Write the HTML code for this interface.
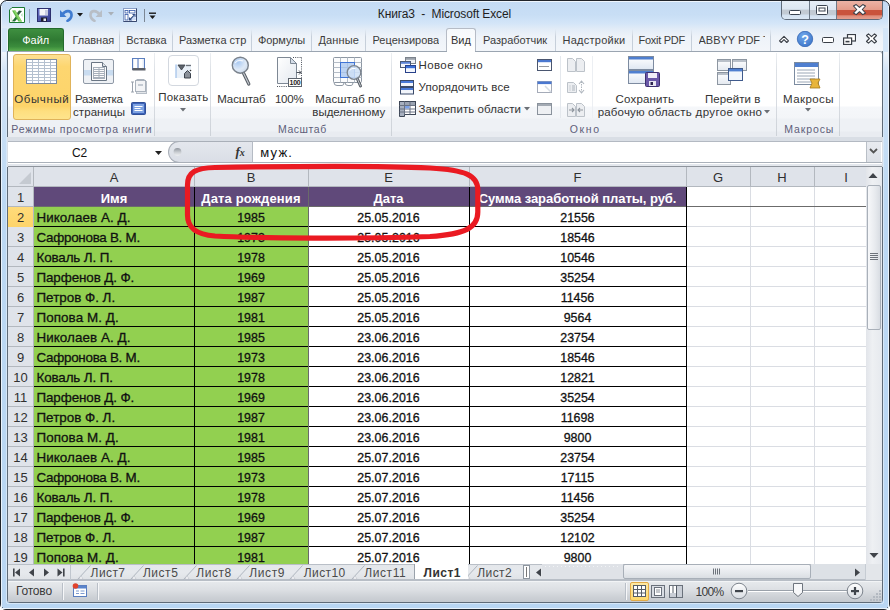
<!DOCTYPE html>
<html><head><meta charset="utf-8">
<style>
*{margin:0;padding:0;box-sizing:border-box}
html,body{width:890px;height:610px;overflow:hidden;background:#fff}
body{font-family:"Liberation Sans",sans-serif;position:relative;color:#000}
.a{position:absolute}
.t{position:absolute;white-space:nowrap;line-height:1}
</style></head><body>
<div class="a" style="left:0px;top:0px;width:890px;height:610px;border:1px solid #20242b;border-radius:7px 7px 6px 6px;background:linear-gradient(#c4dbf4 0,#c8def5 14px,#d3e5f8 22px,#e2ecf7 28px,#eef3f9 36px,#f3f6fa 50px,#d2e4f7 70px,#bcd8f3 200px,#b9d6f3 610px);overflow:hidden"></div>
<div class="a" style="left:1px;top:28px;width:6px;height:24px;background:#d4e6f8"></div>
<div class="a" style="left:883px;top:28px;width:6px;height:24px;background:#d4e6f8"></div>
<div class="a" style="left:1px;top:6px;width:1px;height:603px;background:#eaf3fc"></div>
<div class="a" style="left:6px;top:1px;width:876px;height:1px;background:#eef5fd"></div>
<div class="a" style="left:888px;top:6px;width:1px;height:603px;background:#eaf3fc"></div>
<div class="a" style="left:6px;top:51px;width:1px;height:552px;background:#d6e7f8"></div>
<div class="a" style="left:883px;top:51px;width:1px;height:552px;background:#d6e7f8"></div>
<div class="a" style="left:2px;top:608px;width:886px;height:1px;background:#eaf3fc"></div>
<div class="a" style="left:7px;top:603px;width:876px;height:1px;background:#d6e7f8"></div>
<div class="a" style="left:7px;top:51px;width:876px;height:552px;border:1px solid #5f6b78;border-top:none;border-radius:0 0 4px 4px"></div>
<svg class="a" style="left:9px;top:7px" width="16" height="16" viewBox="0 0 16 16"><path d="M0.5 3 L3 0.5 H15.5 V15.5 H0.5 Z" fill="#fff" stroke="#1b7a33"/><path d="M1.5 4 V14.5 H4 Z" fill="#e2ecd8"/><path d="M13 4 L8.6 9.2 L6.8 7.4 L10 3.4 Z" fill="#2c5e3c"/><path d="M3 14.2 L7 9.3 L8.9 11 L5.8 14.6 Z" fill="#1f6b35"/><path d="M3 3.4 H6.4 L13 14.6 H9.4 Z" fill="#5dbb46"/><path d="M4.4 3.4 H6.4 L13 14.6 H11 Z" fill="#8fd36a"/><path d="M13.5 6 L12 8 L13.5 10 Z" fill="#a6dfb0"/></svg>
<div class="a" style="left:29px;top:9px;width:1px;height:14px;background:#8fa3b8"></div>
<svg class="a" style="left:37px;top:8px" width="14" height="14" viewBox="0 0 14 14"><defs><linearGradient id="sg" x1="0" y1="0" x2="1" y2="1"><stop offset="0" stop-color="#6b74c8"/><stop offset="1" stop-color="#333a8c"/></linearGradient></defs><rect x="0.5" y="0.5" width="13" height="13" fill="url(#sg)" stroke="#2c2f6e"/><rect x="2.5" y="1" width="8.5" height="6.5" fill="#f4f4f8"/><rect x="8" y="2" width="3" height="5" fill="#c8cce0"/><rect x="4" y="9.5" width="6" height="4" fill="#1c1c2c"/><rect x="6.5" y="10.5" width="2.5" height="2.5" fill="#e8e8f0"/></svg>
<svg class="a" style="left:59px;top:8px" width="14" height="14" viewBox="0 0 14 14"><path d="M1 2 L1 9 L7.5 9 Z" fill="#3f7bd0"/><path d="M3.5 6.5 C6 2.5 12 1.5 12.5 6.5 C12.8 9.5 11 11.5 8.5 12.8" fill="none" stroke="#3f7bd0" stroke-width="2.6" stroke-linecap="round"/></svg>
<svg class="a" style="left:77px;top:13px" width="7" height="4" viewBox="0 0 7 4"><path d="M0 0h6l-3 3.5z" fill="#1a1a1a"/></svg>
<svg class="a" style="left:89px;top:8px" width="14" height="14" viewBox="0 0 14 14"><path d="M13 2 L13 9 L6.5 9 Z" fill="#b8bec6"/><path d="M10.5 6.5 C8 2.5 2 1.5 1.5 6.5 C1.2 9.5 3 11.5 5.5 12.8" fill="none" stroke="#b8bec6" stroke-width="2.6" stroke-linecap="round"/></svg>
<svg class="a" style="left:108px;top:12px" width="7" height="4" viewBox="0 0 7 4"><path d="M0 0h6l-3 3.5z" fill="#a9b0b8"/></svg>
<svg class="a" style="left:123px;top:8px" width="14" height="14" viewBox="0 0 14 14"><rect x="0.5" y="0.5" width="13" height="13" fill="#fff" stroke="#8aa0c8"/><path d="M13.5 0.5 V13.5 H0.5" fill="none" stroke="#3a4a70"/><rect x="2" y="2.5" width="3" height="2.5" fill="#fff" stroke="#3358a8" stroke-width="0.8"/><rect x="6.5" y="2.5" width="5.5" height="2.5" fill="#fff" stroke="#3358a8" stroke-width="0.8"/><rect x="2" y="6.5" width="3" height="5.5" fill="#fff" stroke="#3358a8" stroke-width="0.8"/><path d="M7 11.5 L11.5 7 M9.5 6.5 H12 V9 M6.5 9.5 V12 H9" fill="none" stroke="#2f4a80" stroke-width="1.1"/><path d="M12 6 L13 12 L7 13 Z" fill="#9cb8ea" opacity="0.5"/></svg>
<div class="a" style="left:144px;top:9px;width:1px;height:13px;background:#7c8794"></div>
<svg class="a" style="left:149px;top:12px" width="8" height="8" viewBox="0 0 8 8"><rect x="0" y="0.5" width="7" height="1.4" fill="#1a1a1a"/><path d="M0.5 3.5h6l-3 3.5z" fill="#1a1a1a"/></svg>
<div class="t" style="left:377.78px;top:7.79px;font-size:12px;color:#1e1e1e;letter-spacing:-0.121px;">Книга3&nbsp;&nbsp;-&nbsp;&nbsp;Microsoft Excel</div>
<div class="a" style="left:781px;top:1px;width:102px;height:19px;border:1px solid #5f6b7a;border-top:none;border-radius:0 0 5px 5px;overflow:hidden;background:#d0dcea"><div class="a" style="left:0;top:0;width:27px;height:18px;background:linear-gradient(#e6eef7 0,#dce6f2 45%,#c2cad3 50%,#c3cbd4 72%,#d3e1f0 78%,#dbe7f4 100%)"></div><div class="a" style="left:27px;top:0;width:1px;height:19px;background:#6d7987"></div><div class="a" style="left:28px;top:0;width:26px;height:19px;background:linear-gradient(#e6eef7 0,#dce6f2 45%,#c2cad3 50%,#c3cbd4 72%,#d3e1f0 78%,#dbe7f4 100%)"></div><div class="a" style="left:54px;top:0;width:1px;height:19px;background:#6d7987"></div><div class="a" style="left:55px;top:0;width:47px;height:19px;background:linear-gradient(#ebb3a5 0,#e49c8a 45%,#c9533c 50%,#c9533c 72%,#de8c79 78%,#e8a494 100%)"></div></div>
<svg class="a" style="left:789px;top:10px" width="12" height="5" viewBox="0 0 12 5"><rect x="0.5" y="0.5" width="11" height="4" rx="1" fill="#fff" stroke="#3a4350"/></svg>
<svg class="a" style="left:816px;top:5px" width="12" height="10" viewBox="0 0 12 10"><rect x="0.5" y="0.5" width="11" height="9" rx="1" fill="#fff" stroke="#3a4350"/><rect x="3" y="3" width="6" height="3" fill="none" stroke="#3a4350"/></svg>
<svg class="a" style="left:852px;top:4px" width="15" height="12" viewBox="0 0 15 12"><path d="M1.5 2 L4.2 0.6 L7.5 3.4 L10.8 0.6 L13.5 2 L10.3 5.5 L13.5 9 L10.8 10.6 L7.5 7.7 L4.2 10.6 L1.5 9 L4.7 5.5 Z" fill="#fff" stroke="#3a3f47" stroke-width="1.1" stroke-linejoin="round"/></svg>
<div class="a" style="left:8px;top:28px;width:56px;height:23px;border:1px solid #236b2c;border-bottom:none;border-radius:3px 3px 0 0;background:linear-gradient(#3f8f40 0,#2f7a33 50%,#3b8c3c 80%,#5aae4e 100%)"></div>
<div class="t" style="left:22.20px;top:34.61px;font-size:11px;color:#fff;">Файл</div>
<div class="t" style="left:72.40px;top:34.51px;font-size:11px;color:#3c3c3c;">Главная</div>
<div class="t" style="left:126.30px;top:34.51px;font-size:11px;color:#3c3c3c;letter-spacing:-0.1px;">Вставка</div>
<div class="t" style="left:179.00px;top:34.51px;font-size:11px;color:#3c3c3c;">Разметка стр</div>
<div class="t" style="left:258.00px;top:34.51px;font-size:11px;color:#3c3c3c;letter-spacing:-0.1px;">Формулы</div>
<div class="t" style="left:318.50px;top:34.51px;font-size:11px;color:#3c3c3c;letter-spacing:0.15px;">Данные</div>
<div class="t" style="left:372.50px;top:34.51px;font-size:11px;color:#3c3c3c;width:66.5px;overflow:hidden;">Рецензирова</div>
<div class="t" style="left:483.00px;top:34.51px;font-size:11px;color:#3c3c3c;width:65px;overflow:hidden;">Разработчик</div>
<div class="t" style="left:562.50px;top:34.51px;font-size:11px;color:#3c3c3c;letter-spacing:0.25px;">Надстройки</div>
<div class="t" style="left:638.50px;top:34.51px;font-size:11px;color:#3c3c3c;letter-spacing:-0.27px;">Foxit PDF</div>
<div class="t" style="left:698.50px;top:34.51px;font-size:11px;color:#3c3c3c;width:66.5px;overflow:hidden;">ABBYY PDF Tr</div>
<div class="a" style="left:119px;top:29px;width:1px;height:22px;background:linear-gradient(rgba(205,214,226,0),#c6cfda 35%,#c6cfda)"></div>
<div class="a" style="left:172px;top:29px;width:1px;height:22px;background:linear-gradient(rgba(205,214,226,0),#c6cfda 35%,#c6cfda)"></div>
<div class="a" style="left:251px;top:29px;width:1px;height:22px;background:linear-gradient(rgba(205,214,226,0),#c6cfda 35%,#c6cfda)"></div>
<div class="a" style="left:311px;top:29px;width:1px;height:22px;background:linear-gradient(rgba(205,214,226,0),#c6cfda 35%,#c6cfda)"></div>
<div class="a" style="left:365px;top:29px;width:1px;height:22px;background:linear-gradient(rgba(205,214,226,0),#c6cfda 35%,#c6cfda)"></div>
<div class="a" style="left:555px;top:29px;width:1px;height:22px;background:linear-gradient(rgba(205,214,226,0),#c6cfda 35%,#c6cfda)"></div>
<div class="a" style="left:632px;top:29px;width:1px;height:22px;background:linear-gradient(rgba(205,214,226,0),#c6cfda 35%,#c6cfda)"></div>
<div class="a" style="left:691px;top:29px;width:1px;height:22px;background:linear-gradient(rgba(205,214,226,0),#c6cfda 35%,#c6cfda)"></div>
<div class="a" style="left:770px;top:29px;width:1px;height:22px;background:linear-gradient(rgba(205,214,226,0),#c6cfda 35%,#c6cfda)"></div>
<div class="a" style="left:446px;top:28px;width:30px;height:24px;border:1px solid #b6bcc6;border-bottom:none;border-radius:3px 3px 0 0;background:linear-gradient(#f6f9fc,#ffffff)"></div>
<div class="t" style="left:451.00px;top:34.51px;font-size:11px;color:#333;">Вид</div>
<svg class="a" style="left:778px;top:35px" width="12" height="9" viewBox="0 0 12 9"><path d="M1.5 5.8 L6 1.3 L10.5 5.8 L8.8 7.5 L6 4.7 L3.2 7.5 Z" fill="#fff" stroke="#3a3f47" stroke-width="1.1" stroke-linejoin="round"/></svg>
<svg class="a" style="left:796px;top:31px" width="18" height="16" viewBox="0 0 18 16"><defs><radialGradient id="hg" cx="0.4" cy="0.3" r="0.8"><stop offset="0" stop-color="#6fa6ea"/><stop offset="1" stop-color="#3b74c8"/></radialGradient></defs><circle cx="9" cy="8" r="7.7" fill="url(#hg)" stroke="#3566b4" stroke-width="0.8"/><text x="9" y="12.6" font-family="Liberation Sans" font-weight="700" font-size="12.5" fill="#fff" text-anchor="middle">?</text></svg>
<svg class="a" style="left:822px;top:37px" width="12" height="6" viewBox="0 0 12 6"><rect x="0.5" y="0.5" width="11" height="5" rx="1" fill="#fff" stroke="#3a3f47"/></svg>
<svg class="a" style="left:843px;top:34px" width="13" height="11" viewBox="0 0 13 11"><rect x="4.5" y="0.5" width="8" height="6.5" fill="#fff" stroke="#3a3f47" stroke-width="1.2"/><rect x="0.6" y="4" width="8" height="6.5" fill="#fff" stroke="#3a3f47" stroke-width="1.2"/><rect x="2.5" y="6.8" width="4" height="1.6" fill="#3a3f47"/></svg>
<svg class="a" style="left:865px;top:33px" width="13" height="11" viewBox="0 0 13 11"><path d="M1.5 2.5 L3.5 0.8 L6.5 3.6 L9.5 0.8 L11.5 2.5 L8.6 5.5 L11.5 8.5 L9.5 10.2 L6.5 7.4 L3.5 10.2 L1.5 8.5 L4.4 5.5 Z" fill="#fff" stroke="#3a3f47" stroke-width="1.1" stroke-linejoin="round"/></svg>
<div class="a" style="left:7px;top:51px;width:876px;height:87px;border:1px solid #9ba5b1;border-left-color:#5f6b78;border-right-color:#5f6b78;border-radius:0 3px 0 0;background:linear-gradient(#ffffff 0,#ffffff 54px,#f5f7fa 55px,#f3f5f8 66px,#eef1f5 67px,#eef1f5 79px,#e9ecf1 80px,#e9ecf1 100%)"></div>
<div class="a" style="left:447px;top:51px;width:28px;height:1px;background:#ffffff"></div>
<div class="a" style="left:154px;top:53px;width:1px;height:83px;background:linear-gradient(#eceff2,#dde1e6 20%,#d8dce2 60%,#cdd2d8 100%)"></div>
<div class="a" style="left:210px;top:53px;width:1px;height:83px;background:linear-gradient(#eceff2,#dde1e6 20%,#d8dce2 60%,#cdd2d8 100%)"></div>
<div class="a" style="left:391px;top:53px;width:1px;height:83px;background:linear-gradient(#eceff2,#dde1e6 20%,#d8dce2 60%,#cdd2d8 100%)"></div>
<div class="a" style="left:776px;top:53px;width:1px;height:83px;background:linear-gradient(#eceff2,#dde1e6 20%,#d8dce2 60%,#cdd2d8 100%)"></div>
<div class="a" style="left:839px;top:53px;width:1px;height:83px;background:linear-gradient(#eceff2,#dde1e6 20%,#d8dce2 60%,#cdd2d8 100%)"></div>
<div class="a" style="left:560px;top:56px;width:1px;height:62px;background:#e4e8ed"></div>
<div class="a" style="left:592px;top:56px;width:1px;height:62px;background:#eceff3"></div>
<div class="a" style="left:13px;top:54px;width:58px;height:66px;border:1px solid #e0b35a;border-radius:3px;background:linear-gradient(#fde093 0,#fdd670 18%,#fdd46a 80%,#fedf80 88%,#fee48c 100%)"></div>
<svg class="a" style="left:26px;top:59px" width="32" height="26" viewBox="0 0 32 26"><rect x="0.5" y="0.5" width="30" height="24" fill="#ffffff" stroke="#8392a6"/><path d="M0.5 3.5 H30.5" stroke="#b4c0cf"/><path d="M0.5 6.5 H30.5" stroke="#b4c0cf"/><path d="M0.5 9.5 H30.5" stroke="#b4c0cf"/><path d="M0.5 12.5 H30.5" stroke="#b4c0cf"/><path d="M0.5 15.5 H30.5" stroke="#b4c0cf"/><path d="M0.5 18.5 H30.5" stroke="#b4c0cf"/><path d="M0.5 21.5 H30.5" stroke="#b4c0cf"/><path d="M6.5 0.5 V24.5" stroke="#b4c0cf"/><path d="M12.5 0.5 V24.5" stroke="#b4c0cf"/><path d="M18.5 0.5 V24.5" stroke="#b4c0cf"/><path d="M24.5 0.5 V24.5" stroke="#b4c0cf"/><rect x="0.5" y="0.5" width="30" height="24" fill="none" stroke="#7d8ca0"/></svg>
<div class="t" style="left:14.31px;top:93.52px;font-size:11.5px;color:#333;letter-spacing:0.589px;">Обычный</div>
<svg class="a" style="left:83px;top:59px" width="32" height="26" viewBox="0 0 32 26"><rect x="0.5" y="0.5" width="30" height="24" rx="1.5" fill="#eef1f5" stroke="#8f99a6"/><rect x="1" y="11" width="29" height="5.5" fill="#c9dcf0"/><path d="M8.5 3.5 H19.5 L23.5 7.5 V21.5 H8.5 Z" fill="#fbfbfc" stroke="#6a7684"/><path d="M19.5 3.5 V7.5 H23.5" fill="#dfe3e8" stroke="#6a7684"/><rect x="10.5" y="8.5" width="11" height="11" fill="none" stroke="#a7b0bb"/><path d="M10.5 10.5h11M10.5 12.5h11M10.5 14.5h11M10.5 16.5h11M10.5 18.5h11M16 8.5v11" stroke="#a7b0bb"/></svg>
<div class="t" style="left:75.01px;top:93.52px;font-size:11.5px;color:#333;letter-spacing:-0.26px;">Разметка</div>
<div class="t" style="left:73.01px;top:106.82px;font-size:11.5px;color:#333;letter-spacing:0.078px;">страницы</div>
<svg class="a" style="left:132px;top:58px" width="14" height="13" viewBox="0 0 14 13"><rect x="0.5" y="0.5" width="12" height="11" fill="#e4ecf8" stroke="#5c7fbf"/><rect x="2" y="1" width="3.5" height="9" fill="#fff"/><rect x="7" y="1" width="3.5" height="9" fill="#fff"/><path d="M6 1v10" stroke="#5c7fbf"/><rect x="0.5" y="10" width="13" height="2.5" fill="#5a5f68"/></svg>
<svg class="a" style="left:131px;top:79px" width="16" height="15" viewBox="0 0 16 15"><path d="M1.5 3v10M0 3h3M0 13h3" stroke="#9aa2ad"/><rect x="5.5" y="2.5" width="10" height="12" fill="#e3e6ea" stroke="#b7bec7"/><rect x="4.5" y="1.5" width="10" height="11" fill="#f3f4f6" stroke="#aab2bc"/><rect x="7" y="5" width="5" height="2" fill="#c4cad2"/><path d="M6 0.5h7M6 0v2M13 0v2" stroke="#aab2bc"/></svg>
<svg class="a" style="left:131px;top:102px" width="15" height="13" viewBox="0 0 15 13"><rect x="0.5" y="0.5" width="14" height="12" rx="1" fill="#3d63b8" stroke="#2f4f98"/><rect x="2" y="2" width="11" height="9" fill="#7fa3e2"/><path d="M3.5 4.5h8M3.5 6.5h6M3.5 8.5h8" stroke="#fff" stroke-width="1"/></svg>
<div class="t" style="left:11.37px;top:124.16px;font-size:10.5px;color:#5e5e7a;letter-spacing:0.791px;">Режимы просмотра книги</div>
<div class="a" style="left:168px;top:55px;width:31px;height:31px;border:1px solid #d3d8df;border-radius:4px;background:#fff"></div>
<svg class="a" style="left:175px;top:63px" width="17" height="16" viewBox="0 0 17 16"><rect x="1" y="1.5" width="15" height="13.5" fill="#e9f0f8"/><path d="M1 1.5 V15" stroke="#9fc0ea" stroke-width="1.2"/><path d="M3 2 H10 L6.5 7 Z" fill="#5d636b" stroke="#3b4048" stroke-width="0.8"/><path d="M11 2.5 H16" stroke="#6d737b" stroke-width="1.3"/><path d="M9.5 15 V10.5 L12.5 7.5 L15.5 10.5 V15 Z" fill="#8a9099" stroke="#2f3540" stroke-width="0.9"/><circle cx="15.5" cy="7.5" r="0.8" fill="#333"/></svg>
<div class="t" style="left:158.31px;top:91.52px;font-size:11.5px;color:#333;letter-spacing:0.156px;">Показать</div>
<svg class="a" style="left:180px;top:108px" width="7" height="4" viewBox="0 0 7 4"><path d="M0 0h6l-3 3.5z" fill="#6b6f75"/></svg>
<svg class="a" style="left:230px;top:55px" width="22" height="32" viewBox="0 0 22 32"><defs><radialGradient id="lg" cx="0.35" cy="0.3" r="0.8"><stop offset="0" stop-color="#a9c9f2"/><stop offset="0.6" stop-color="#dfeaf7"/><stop offset="1" stop-color="#c9d6e6"/></radialGradient></defs><path d="M13.2 17.5 L18.8 29" stroke="#555b63" stroke-width="3.2" stroke-linecap="round"/><path d="M13.2 17.5 L18.8 29" stroke="#c3c8ce" stroke-width="1.2" stroke-linecap="round"/><circle cx="10.3" cy="10.2" r="8" fill="url(#lg)" stroke="#7b838d" stroke-width="1.4"/><path d="M5 8 q3 -4 8 -2" stroke="#fff" stroke-width="1.2" fill="none" opacity="0.8"/></svg>
<div class="t" style="left:217.31px;top:93.52px;font-size:11.5px;color:#333;letter-spacing:-0.137px;">Масштаб</div>
<svg class="a" style="left:276px;top:56px" width="28" height="33" viewBox="0 0 28 33"><defs><linearGradient id="pg" x1="0" y1="0" x2="1" y2="1"><stop offset="0" stop-color="#ffffff"/><stop offset="1" stop-color="#e3e8ef"/></linearGradient></defs><path d="M1.5 1.5 H14.5 L20.5 7.5 V27.5 H1.5 Z" fill="url(#pg)" stroke="#7e8894"/><path d="M14.5 1.5 V7.5 H20.5 Z" fill="#d5dde8" stroke="#7e8894"/><path d="M17 1.5 H26 M25.5 1.5 V31 M1 30.5 H25" stroke="#4a505a" stroke-dasharray="1 1.2"/><path d="M20.5 16.5 H25 M23 14.5 L25 16.5 L23 18.5" fill="none" stroke="#4a505a"/><rect x="12.5" y="22.5" width="13" height="8" fill="#fff" stroke="#5d646e"/><text x="19" y="29.3" font-family="Liberation Sans" font-weight="700" font-size="7" fill="#222" text-anchor="middle" letter-spacing="-0.3">100</text></svg>
<div class="t" style="left:274.91px;top:93.52px;font-size:11.5px;color:#333;letter-spacing:-0.214px;">100%</div>
<svg class="a" style="left:333px;top:57px" width="30" height="31" viewBox="0 0 30 31"><rect x="0.5" y="0.5" width="28" height="25" rx="1" fill="#fbfcfd" stroke="#8d97a3"/><path d="M0.5 5.5 H28.5" stroke="#b3bcc7"/><path d="M0.5 10.5 H28.5" stroke="#b3bcc7"/><path d="M0.5 15.5 H28.5" stroke="#b3bcc7"/><path d="M0.5 20.5 H28.5" stroke="#b3bcc7"/><path d="M7.5 0.5 V25.5" stroke="#b3bcc7"/><path d="M14.5 0.5 V25.5" stroke="#b3bcc7"/><path d="M21.5 0.5 V25.5" stroke="#b3bcc7"/><path d="M1 25.5 q0 3 3 3 h5 q2 0 2 -3 M12 25.5 q0 3 3 3 h3 q2 0 2 -3" fill="none" stroke="#8d97a3"/><rect x="7.5" y="5.5" width="14" height="15" fill="#a6c4ee" fill-opacity="0.75" stroke="#3f74d6"/><path d="M24 21 L27.5 29" stroke="#555b63" stroke-width="3" stroke-linecap="round"/><path d="M24 21 L27.5 29" stroke="#c3c8ce" stroke-width="1" stroke-linecap="round"/><circle cx="21" cy="15.5" r="6.8" fill="#cfe0f6" fill-opacity="0.85" stroke="#7b838d" stroke-width="1.3"/><path d="M16.5 13.5 q2 -3 6 -2" stroke="#fff" stroke-width="1" fill="none"/></svg>
<div class="t" style="left:315.31px;top:93.52px;font-size:11.5px;color:#333;letter-spacing:0.039px;">Масштаб по</div>
<div class="t" style="left:312.31px;top:106.82px;font-size:11.5px;color:#333;letter-spacing:-0.021px;">выделенному</div>
<div class="t" style="left:277.97px;top:124.16px;font-size:10.5px;color:#5e5e7a;letter-spacing:0.554px;">Масштаб</div>
<svg class="a" style="left:399px;top:56px" width="18" height="17" viewBox="0 0 18 17"><rect x="6.5" y="1.5" width="10" height="6" fill="#eef0f3" stroke="#7c838c"/><rect x="7" y="2" width="9" height="1.8" fill="#9aa1aa"/><rect x="1.5" y="5.5" width="10" height="6" fill="#f3f5fa" stroke="#4b5a78"/><rect x="2" y="6" width="9" height="1.8" fill="#5f86d8"/><rect x="6.5" y="9.5" width="10" height="7" fill="#f4f7fd" stroke="#28418a"/><rect x="7" y="10" width="9" height="2.2" fill="#3b6fd6"/></svg>
<div class="t" style="left:418.61px;top:59.52px;font-size:11.5px;color:#333;letter-spacing:0.36px;">Новое окно</div>
<svg class="a" style="left:400px;top:80px" width="15" height="15" viewBox="0 0 15 15"><rect x="0.5" y="0.5" width="13" height="6" fill="#f2f5fb" stroke="#3a4a6a"/><rect x="1" y="1" width="12" height="2" fill="#4a7ad8"/><rect x="0.5" y="7.5" width="13" height="6.5" fill="#f2f5fb" stroke="#3a4a6a"/><rect x="1" y="8" width="12" height="2" fill="#4a7ad8"/></svg>
<div class="t" style="left:418.61px;top:81.52px;font-size:11.5px;color:#333;letter-spacing:0.094px;">Упорядочить все</div>
<svg class="a" style="left:399px;top:101px" width="18" height="16" viewBox="0 0 18 16"><rect x="0.5" y="0.5" width="16" height="13" fill="#fff" stroke="#3d4656"/><rect x="1" y="1" width="15" height="3" fill="#9aa3b2"/><rect x="1" y="1" width="4.5" height="14" fill="#a7b0bf"/><path d="M0.5 4.5H16.5M0.5 8H16.5M0.5 11H16.5M5.5 0.5V13.5M11 0.5V13.5" stroke="#6a7384"/><rect x="6" y="5" width="4.5" height="2.5" fill="#7aa0e6"/><path d="M0.5 13.5 V15.5 H5.5 V13.5" fill="#a7b0bf" stroke="#3d4656"/></svg>
<div class="t" style="left:418.61px;top:103.52px;font-size:11.5px;color:#333;letter-spacing:0.068px;">Закрепить области</div>
<svg class="a" style="left:524px;top:107px" width="7" height="4" viewBox="0 0 7 4"><path d="M0 0h6l-3 3.5z" fill="#6b6f75"/></svg>
<svg class="a" style="left:536px;top:58px" width="17" height="14" viewBox="0 0 17 14"><rect x="1.5" y="1.5" width="14" height="11" fill="#fff" stroke="#4a5670"/><rect x="2" y="2" width="13" height="2.2" fill="#4b78d0"/><path d="M3.5 8.5h10" stroke="#2f3540" stroke-dasharray="1 1"/></svg>
<svg class="a" style="left:536px;top:80px" width="17" height="14" viewBox="0 0 17 14"><rect x="1.5" y="1.5" width="14" height="11" fill="#fff" stroke="#4a5670" stroke-dasharray="1 1"/><rect x="1.5" y="1.5" width="14" height="2.6" fill="#4b78d0"/><path d="M15 12 L9 6" stroke="#d6dce4" stroke-width="1.5"/></svg>
<svg class="a" style="left:536px;top:102px" width="17" height="14" viewBox="0 0 17 14"><rect x="1.5" y="1.5" width="14" height="11" fill="#eef0f3" stroke="#8a929c"/><rect x="2" y="2" width="13" height="2" fill="#a3aab3"/></svg>
<svg class="a" style="left:567px;top:58px" width="18" height="14" viewBox="0 0 18 14"><path d="M0.5 0.5 H5.5 L8.5 3.5 V13.5 H0.5 Z M9.5 0.5 H14.5 L17.5 3.5 V13.5 H9.5 Z" fill="#eceef1" stroke="#bcc2c9"/></svg>
<svg class="a" style="left:567px;top:80px" width="18" height="14" viewBox="0 0 18 14"><path d="M0.5 2.5 H6.5 L9.5 5.5 V12.5 H0.5 Z" fill="#eceef1" stroke="#bcc2c9"/><path d="M2.5 6h1M2.5 8h1M2.5 10h1M5 6h3M5 8h3M5 10h3" stroke="#aeb5bd"/><path d="M14.5 1.5 V12.5" stroke="#aeb5bd" stroke-dasharray="1.5 1"/><path d="M12 4 L14.5 1 L17 4 M12 10 L14.5 13 L17 10" fill="none" stroke="#aeb5bd" stroke-width="1.1"/></svg>
<svg class="a" style="left:567px;top:103px" width="18" height="14" viewBox="0 0 18 14"><path d="M0.5 0.5 H5.5 L8.5 3.5 V13.5 H0.5 Z M9.5 0.5 H14.5 L17.5 3.5 V13.5 H9.5 Z" fill="#eceef1" stroke="#bcc2c9"/><path d="M2 7h5M5 5l2 2-2 2M16 7h-5M13 5l-2 2 2 2" fill="none" stroke="#8f969e" stroke-width="1.1"/></svg>
<svg class="a" style="left:628px;top:56px" width="33" height="32" viewBox="0 0 33 32"><defs><linearGradient id="wg2" x1="0" y1="0" x2="0" y2="1"><stop offset="0" stop-color="#ffffff"/><stop offset="1" stop-color="#dfe7f2"/></linearGradient></defs><rect x="0.5" y="0.5" width="25" height="13" fill="url(#wg2)" stroke="#7d8ba0"/><rect x="1" y="1" width="24" height="2.5" fill="#4f7fd0"/><rect x="0.5" y="14.5" width="25" height="13" fill="url(#wg2)" stroke="#7d8ba0"/><rect x="1" y="15" width="24" height="2.5" fill="#4f7fd0"/><rect x="17.5" y="16.5" width="14" height="14" rx="1" fill="#6a58a8" stroke="#3e3070"/><rect x="20" y="17" width="9" height="5" fill="#f0eef8"/><rect x="21" y="25" width="7" height="5" fill="#e8e6f2"/><rect x="22.5" y="26" width="2.5" height="3" fill="#2d2450"/></svg>
<div class="t" style="left:615.61px;top:93.52px;font-size:11.5px;color:#333;letter-spacing:0.153px;">Сохранить</div>
<div class="t" style="left:597.71px;top:106.82px;font-size:11.5px;color:#333;letter-spacing:0.165px;">рабочую область</div>
<svg class="a" style="left:717px;top:59px" width="31" height="27" viewBox="0 0 31 27"><defs><linearGradient id="wg" x1="0" y1="0" x2="0" y2="1"><stop offset="0" stop-color="#ffffff"/><stop offset="1" stop-color="#e4e9f0"/></linearGradient></defs><rect x="0.5" y="0.5" width="13" height="11" fill="url(#wg)" stroke="#8d96a1"/><rect x="1" y="1" width="12" height="2" fill="#b9c0c9"/><rect x="15.5" y="0.5" width="14" height="11" fill="url(#wg)" stroke="#8d96a1"/><rect x="16" y="1" width="13" height="2" fill="#b9c0c9"/><rect x="0.5" y="13.5" width="13" height="12" fill="url(#wg)" stroke="#8d96a1"/><rect x="1" y="14" width="12" height="2" fill="#b9c0c9"/><rect x="11.5" y="9.5" width="14" height="12" fill="#f2f6fc" stroke="#3f5a8c"/><rect x="12" y="10" width="13" height="2.4" fill="#4f7fd0"/></svg>
<div class="t" style="left:705.01px;top:93.52px;font-size:11.5px;color:#333;letter-spacing:0.063px;">Перейти в</div>
<div class="t" style="left:695.61px;top:106.82px;font-size:11.5px;color:#333;letter-spacing:0.354px;">другое окно</div>
<svg class="a" style="left:764px;top:110px" width="7" height="4" viewBox="0 0 7 4"><path d="M0 0h6l-3 3.5z" fill="#6b6f75"/></svg>
<div class="t" style="left:569.77px;top:124.16px;font-size:10.5px;color:#5e5e7a;letter-spacing:1.618px;">Окно</div>
<svg class="a" style="left:794px;top:62px" width="32" height="28" viewBox="0 0 32 28"><rect x="0.5" y="0.5" width="24" height="22" fill="#fff" stroke="#7b8ba0"/><rect x="1" y="1" width="23" height="4" fill="#4f7fd0"/><path d="M3 8h18M3 11h18M3 14h18M3 17h18M3 20h18" stroke="#9aa6b5"/><path d="M16 17 h10 l-2 4 l2 5 h-10 l2-5z" fill="#e8b53c" stroke="#a57818" stroke-width="0.8"/></svg>
<div class="t" style="left:783.11px;top:93.52px;font-size:11.5px;color:#333;letter-spacing:0.404px;">Макросы</div>
<svg class="a" style="left:805px;top:108px" width="7" height="4" viewBox="0 0 7 4"><path d="M0 0h6l-3 3.5z" fill="#6b6f75"/></svg>
<div class="t" style="left:784.17px;top:124.16px;font-size:10.5px;color:#5e5e7a;letter-spacing:0.913px;">Макросы</div>
<div class="a" style="left:7px;top:137px;width:876px;height:30px;background:#d9dee5"></div>
<div class="a" style="left:8px;top:141px;width:874px;height:22px;background:#fff;border-top:1px solid #b3b9c2;border-bottom:1px solid #aab1ba"></div>
<div class="a" style="left:168px;top:141px;width:85px;height:22px;border:1px solid #a9afb8;border-right:1px solid #b5bbc4;border-radius:11px 0 0 11px;background:linear-gradient(#e4e7ed,#dadee6)"></div>
<svg class="a" style="left:173px;top:147px" width="10" height="10" viewBox="0 0 10 10"><defs><linearGradient id="kg" x1="0" y1="0" x2="0" y2="1"><stop offset="0" stop-color="#8e949c"/><stop offset="0.55" stop-color="#c9cdd2"/><stop offset="1" stop-color="#eef0f2"/></linearGradient></defs><circle cx="4.5" cy="4.8" r="3.9" fill="url(#kg)"/></svg>
<div class="t" style="left:235.5px;top:144.5px;font-family:'Liberation Serif',serif;font-style:italic;font-weight:700;font-size:13px;color:#333">f<span style="font-size:10px">x</span></div>
<div class="t" style="left:72.00px;top:147.39px;font-size:12px;color:#111;letter-spacing:-0.2px;">C2</div>
<svg class="a" style="left:155px;top:151px" width="8" height="5" viewBox="0 0 8 5"><path d="M0 0h7l-3.5 4z" fill="#222"/></svg>
<div class="t" style="left:260.32px;top:146.15px;font-size:13px;color:#111;letter-spacing:1.171px;">муж.</div>
<div class="a" style="left:866px;top:142px;width:15px;height:20px;background:linear-gradient(#e8ebf0,#dde1e7);border-left:1px solid #b9bfc7"></div>
<svg class="a" style="left:869px;top:148px" width="9" height="6" viewBox="0 0 9 6"><path d="M1 1 L4.5 4.5 L8 1" fill="none" stroke="#555" stroke-width="1.8"/></svg>
<div class="a" style="left:8px;top:163px;width:874px;height:3px;background:linear-gradient(#ffffff 0,#ffffff 33%,#e3e7ed 34%)"></div>
<div class="a" style="left:8px;top:166px;width:874px;height:1px;background:#8e949c"></div>
<div class="a" style="left:8px;top:167px;width:858px;height:20px;background:#dfe3ea"></div>
<div class="a" style="left:8px;top:186px;width:858px;height:1px;background:#b3b8bf"></div>
<svg class="a" style="left:8px;top:167px" width="26" height="20" viewBox="0 0 26 20"><path d="M23 5 L23 17 L11 17 Z" fill="#c5cad1"/></svg>
<div class="a" style="left:33px;top:167px;width:1px;height:20px;background:#b3b8bf"></div>
<div class="a" style="left:194px;top:167px;width:1px;height:20px;background:#b3b8bf"></div>
<div class="t" style="left:34px;width:160px;text-align:center;top:170.57px;font-size:13px;color:#2f2f2f">A</div>
<div class="a" style="left:308px;top:167px;width:1px;height:20px;background:#b3b8bf"></div>
<div class="t" style="left:194px;width:114px;text-align:center;top:170.57px;font-size:13px;color:#2f2f2f">B</div>
<div class="a" style="left:469px;top:167px;width:1px;height:20px;background:#b3b8bf"></div>
<div class="t" style="left:308px;width:161px;text-align:center;top:170.57px;font-size:13px;color:#2f2f2f">E</div>
<div class="a" style="left:686px;top:167px;width:1px;height:20px;background:#b3b8bf"></div>
<div class="t" style="left:469px;width:217px;text-align:center;top:170.57px;font-size:13px;color:#2f2f2f">F</div>
<div class="a" style="left:750px;top:167px;width:1px;height:20px;background:#b3b8bf"></div>
<div class="t" style="left:686px;width:64px;text-align:center;top:170.57px;font-size:13px;color:#2f2f2f">G</div>
<div class="a" style="left:814px;top:167px;width:1px;height:20px;background:#b3b8bf"></div>
<div class="t" style="left:750px;width:64px;text-align:center;top:170.57px;font-size:13px;color:#2f2f2f">H</div>
<div class="t" style="left:814px;width:64px;text-align:center;top:170.57px;font-size:13px;color:#2f2f2f">I</div>
<div class="a" style="left:34px;top:187px;width:832px;height:378px;background:#fff"></div>
<div class="a" style="left:8px;top:187px;width:25px;height:378px;background:#dfe3ea"></div>
<div class="a" style="left:33px;top:187px;width:1px;height:378px;background:#b3b8bf"></div>
<div class="a" style="left:8px;top:206px;width:25px;height:1px;background:#b3b8bf"></div>
<div class="t" style="left:8px;width:25px;text-align:center;top:190.67px;font-size:13px;color:#2f2f2f">1</div>
<div class="a" style="left:8px;top:207px;width:25px;height:20px;background:linear-gradient(#ffdb7a,#fdd46a)"></div>
<div class="a" style="left:8px;top:226px;width:25px;height:1px;#f0a045"></div>
<div class="t" style="left:8px;width:25px;text-align:center;top:210.67px;font-size:13px;color:#2f2f2f">2</div>
<div class="a" style="left:8px;top:246px;width:25px;height:1px;background:#b3b8bf"></div>
<div class="t" style="left:8px;width:25px;text-align:center;top:230.67px;font-size:13px;color:#2f2f2f">3</div>
<div class="a" style="left:8px;top:266px;width:25px;height:1px;background:#b3b8bf"></div>
<div class="t" style="left:8px;width:25px;text-align:center;top:250.67px;font-size:13px;color:#2f2f2f">4</div>
<div class="a" style="left:8px;top:286px;width:25px;height:1px;background:#b3b8bf"></div>
<div class="t" style="left:8px;width:25px;text-align:center;top:270.67px;font-size:13px;color:#2f2f2f">5</div>
<div class="a" style="left:8px;top:306px;width:25px;height:1px;background:#b3b8bf"></div>
<div class="t" style="left:8px;width:25px;text-align:center;top:290.67px;font-size:13px;color:#2f2f2f">6</div>
<div class="a" style="left:8px;top:326px;width:25px;height:1px;background:#b3b8bf"></div>
<div class="t" style="left:8px;width:25px;text-align:center;top:310.67px;font-size:13px;color:#2f2f2f">7</div>
<div class="a" style="left:8px;top:346px;width:25px;height:1px;background:#b3b8bf"></div>
<div class="t" style="left:8px;width:25px;text-align:center;top:330.67px;font-size:13px;color:#2f2f2f">8</div>
<div class="a" style="left:8px;top:366px;width:25px;height:1px;background:#b3b8bf"></div>
<div class="t" style="left:8px;width:25px;text-align:center;top:350.67px;font-size:13px;color:#2f2f2f">9</div>
<div class="a" style="left:8px;top:386px;width:25px;height:1px;background:#b3b8bf"></div>
<div class="t" style="left:8px;width:25px;text-align:center;top:370.67px;font-size:13px;color:#2f2f2f">10</div>
<div class="a" style="left:8px;top:406px;width:25px;height:1px;background:#b3b8bf"></div>
<div class="t" style="left:8px;width:25px;text-align:center;top:390.67px;font-size:13px;color:#2f2f2f">11</div>
<div class="a" style="left:8px;top:426px;width:25px;height:1px;background:#b3b8bf"></div>
<div class="t" style="left:8px;width:25px;text-align:center;top:410.67px;font-size:13px;color:#2f2f2f">12</div>
<div class="a" style="left:8px;top:446px;width:25px;height:1px;background:#b3b8bf"></div>
<div class="t" style="left:8px;width:25px;text-align:center;top:430.67px;font-size:13px;color:#2f2f2f">13</div>
<div class="a" style="left:8px;top:466px;width:25px;height:1px;background:#b3b8bf"></div>
<div class="t" style="left:8px;width:25px;text-align:center;top:450.67px;font-size:13px;color:#2f2f2f">14</div>
<div class="a" style="left:8px;top:486px;width:25px;height:1px;background:#b3b8bf"></div>
<div class="t" style="left:8px;width:25px;text-align:center;top:470.67px;font-size:13px;color:#2f2f2f">15</div>
<div class="a" style="left:8px;top:506px;width:25px;height:1px;background:#b3b8bf"></div>
<div class="t" style="left:8px;width:25px;text-align:center;top:490.67px;font-size:13px;color:#2f2f2f">16</div>
<div class="a" style="left:8px;top:526px;width:25px;height:1px;background:#b3b8bf"></div>
<div class="t" style="left:8px;width:25px;text-align:center;top:510.6700000000001px;font-size:13px;color:#2f2f2f">17</div>
<div class="a" style="left:8px;top:546px;width:25px;height:1px;background:#b3b8bf"></div>
<div class="t" style="left:8px;width:25px;text-align:center;top:530.6700000000001px;font-size:13px;color:#2f2f2f">18</div>
<div class="a" style="left:8px;top:566px;width:25px;height:1px;background:#b3b8bf"></div>
<div class="t" style="left:8px;width:25px;text-align:center;top:550.6700000000001px;font-size:13px;color:#2f2f2f">19</div>
<div class="a" style="left:686px;top:206px;width:180px;height:1px;background:#dadde3"></div>
<div class="a" style="left:686px;top:226px;width:180px;height:1px;background:#dadde3"></div>
<div class="a" style="left:686px;top:246px;width:180px;height:1px;background:#dadde3"></div>
<div class="a" style="left:686px;top:266px;width:180px;height:1px;background:#dadde3"></div>
<div class="a" style="left:686px;top:286px;width:180px;height:1px;background:#dadde3"></div>
<div class="a" style="left:686px;top:306px;width:180px;height:1px;background:#dadde3"></div>
<div class="a" style="left:686px;top:326px;width:180px;height:1px;background:#dadde3"></div>
<div class="a" style="left:686px;top:346px;width:180px;height:1px;background:#dadde3"></div>
<div class="a" style="left:686px;top:366px;width:180px;height:1px;background:#dadde3"></div>
<div class="a" style="left:686px;top:386px;width:180px;height:1px;background:#dadde3"></div>
<div class="a" style="left:686px;top:406px;width:180px;height:1px;background:#dadde3"></div>
<div class="a" style="left:686px;top:426px;width:180px;height:1px;background:#dadde3"></div>
<div class="a" style="left:686px;top:446px;width:180px;height:1px;background:#dadde3"></div>
<div class="a" style="left:686px;top:466px;width:180px;height:1px;background:#dadde3"></div>
<div class="a" style="left:686px;top:486px;width:180px;height:1px;background:#dadde3"></div>
<div class="a" style="left:686px;top:506px;width:180px;height:1px;background:#dadde3"></div>
<div class="a" style="left:686px;top:526px;width:180px;height:1px;background:#dadde3"></div>
<div class="a" style="left:686px;top:546px;width:180px;height:1px;background:#dadde3"></div>
<div class="a" style="left:686px;top:566px;width:180px;height:1px;background:#dadde3"></div>
<div class="a" style="left:750px;top:187px;width:1px;height:378px;background:#dadde3"></div>
<div class="a" style="left:814px;top:187px;width:1px;height:378px;background:#dadde3"></div>
<div class="a" style="left:34px;top:187px;width:652px;height:20px;background:#60497a"></div>
<div class="a" style="left:34px;top:206px;width:832px;height:1px;background:#6b6b6b"></div>
<div class="a" style="left:34px;top:207px;width:274px;height:358px;background:#92d050"></div>
<div class="a" style="left:34px;top:226px;width:652px;height:1px;background:#000"></div>
<div class="a" style="left:34px;top:246px;width:652px;height:1px;background:#000"></div>
<div class="a" style="left:34px;top:266px;width:652px;height:1px;background:#000"></div>
<div class="a" style="left:34px;top:286px;width:652px;height:1px;background:#000"></div>
<div class="a" style="left:34px;top:306px;width:652px;height:1px;background:#000"></div>
<div class="a" style="left:34px;top:326px;width:652px;height:1px;background:#000"></div>
<div class="a" style="left:34px;top:346px;width:652px;height:1px;background:#000"></div>
<div class="a" style="left:34px;top:366px;width:652px;height:1px;background:#000"></div>
<div class="a" style="left:34px;top:386px;width:652px;height:1px;background:#000"></div>
<div class="a" style="left:34px;top:406px;width:652px;height:1px;background:#000"></div>
<div class="a" style="left:34px;top:426px;width:652px;height:1px;background:#000"></div>
<div class="a" style="left:34px;top:446px;width:652px;height:1px;background:#000"></div>
<div class="a" style="left:34px;top:466px;width:652px;height:1px;background:#000"></div>
<div class="a" style="left:34px;top:486px;width:652px;height:1px;background:#000"></div>
<div class="a" style="left:34px;top:506px;width:652px;height:1px;background:#000"></div>
<div class="a" style="left:34px;top:526px;width:652px;height:1px;background:#000"></div>
<div class="a" style="left:34px;top:546px;width:652px;height:1px;background:#000"></div>
<div class="a" style="left:34px;top:566px;width:652px;height:1px;background:#000"></div>
<div class="a" style="left:194px;top:187px;width:1px;height:378px;background:#000"></div>
<div class="a" style="left:308px;top:187px;width:1px;height:378px;background:#6a6a6a"></div>
<div class="a" style="left:469px;top:187px;width:1px;height:378px;background:#000"></div>
<div class="a" style="left:686px;top:187px;width:1px;height:378px;background:#000"></div>
<div class="t" style="left:34px;width:160px;text-align:center;top:191.57px;font-size:13px;color:#fff;font-weight:700;">Имя</div>
<div class="t" style="left:194px;width:114px;text-align:center;top:191.57px;font-size:13px;color:#fff;font-weight:700;letter-spacing:0.15px;">Дата рождения</div>
<div class="t" style="left:308px;width:161px;text-align:center;top:191.57px;font-size:13px;color:#fff;font-weight:700;">Дата</div>
<div class="t" style="left:469px;width:217px;text-align:center;top:191.57px;font-size:13px;color:#fff;font-weight:700;letter-spacing:-0.05px;">Сумма заработной платы, руб.</div>
<div class="a" style="left:34px;top:207px;width:832px;height:358px;overflow:hidden;-webkit-text-stroke:0.3px #111">
<div class="t" style="left:2.5px;top:4.13px;font-size:13.4px;color:#111;letter-spacing:0.07px">Николаев А. Д.</div>
<div class="t" style="left:160px;width:114px;text-align:center;top:5.24px;font-size:12.4px;color:#111">1985</div>
<div class="t" style="left:274px;width:161px;text-align:center;top:5.24px;font-size:12.4px;color:#111;letter-spacing:0.05px">25.05.2016</div>
<div class="t" style="left:435px;width:217px;text-align:center;top:5.24px;font-size:12.4px;color:#111">21556</div>
<div class="t" style="left:2.5px;top:24.13px;font-size:13.4px;color:#111;letter-spacing:-0.27px">Сафронова В. М.</div>
<div class="t" style="left:160px;width:114px;text-align:center;top:25.24px;font-size:12.4px;color:#111">1973</div>
<div class="t" style="left:274px;width:161px;text-align:center;top:25.24px;font-size:12.4px;color:#111;letter-spacing:0.05px">25.05.2016</div>
<div class="t" style="left:435px;width:217px;text-align:center;top:25.24px;font-size:12.4px;color:#111">18546</div>
<div class="t" style="left:2.5px;top:44.13px;font-size:13.4px;color:#111;letter-spacing:-0.12px">Коваль Л. П.</div>
<div class="t" style="left:160px;width:114px;text-align:center;top:45.24px;font-size:12.4px;color:#111">1978</div>
<div class="t" style="left:274px;width:161px;text-align:center;top:45.24px;font-size:12.4px;color:#111;letter-spacing:0.05px">25.05.2016</div>
<div class="t" style="left:435px;width:217px;text-align:center;top:45.24px;font-size:12.4px;color:#111">10546</div>
<div class="t" style="left:2.5px;top:64.13px;font-size:13.4px;color:#111;letter-spacing:-0.1px">Парфенов Д. Ф.</div>
<div class="t" style="left:160px;width:114px;text-align:center;top:65.24px;font-size:12.4px;color:#111">1969</div>
<div class="t" style="left:274px;width:161px;text-align:center;top:65.24px;font-size:12.4px;color:#111;letter-spacing:0.05px">25.05.2016</div>
<div class="t" style="left:435px;width:217px;text-align:center;top:65.24px;font-size:12.4px;color:#111">35254</div>
<div class="t" style="left:2.5px;top:84.13px;font-size:13.4px;color:#111;letter-spacing:0px">Петров Ф. Л.</div>
<div class="t" style="left:160px;width:114px;text-align:center;top:85.24px;font-size:12.4px;color:#111">1987</div>
<div class="t" style="left:274px;width:161px;text-align:center;top:85.24px;font-size:12.4px;color:#111;letter-spacing:0.05px">25.05.2016</div>
<div class="t" style="left:435px;width:217px;text-align:center;top:85.24px;font-size:12.4px;color:#111">11456</div>
<div class="t" style="left:2.5px;top:104.13px;font-size:13.4px;color:#111;letter-spacing:0.08px">Попова М. Д.</div>
<div class="t" style="left:160px;width:114px;text-align:center;top:105.24px;font-size:12.4px;color:#111">1981</div>
<div class="t" style="left:274px;width:161px;text-align:center;top:105.24px;font-size:12.4px;color:#111;letter-spacing:0.05px">25.05.2016</div>
<div class="t" style="left:435px;width:217px;text-align:center;top:105.24px;font-size:12.4px;color:#111">9564</div>
<div class="t" style="left:2.5px;top:124.13px;font-size:13.4px;color:#111;letter-spacing:0.07px">Николаев А. Д.</div>
<div class="t" style="left:160px;width:114px;text-align:center;top:125.24px;font-size:12.4px;color:#111">1985</div>
<div class="t" style="left:274px;width:161px;text-align:center;top:125.24px;font-size:12.4px;color:#111;letter-spacing:0.05px">23.06.2016</div>
<div class="t" style="left:435px;width:217px;text-align:center;top:125.24px;font-size:12.4px;color:#111">23754</div>
<div class="t" style="left:2.5px;top:144.13px;font-size:13.4px;color:#111;letter-spacing:-0.27px">Сафронова В. М.</div>
<div class="t" style="left:160px;width:114px;text-align:center;top:145.24px;font-size:12.4px;color:#111">1973</div>
<div class="t" style="left:274px;width:161px;text-align:center;top:145.24px;font-size:12.4px;color:#111;letter-spacing:0.05px">23.06.2016</div>
<div class="t" style="left:435px;width:217px;text-align:center;top:145.24px;font-size:12.4px;color:#111">18546</div>
<div class="t" style="left:2.5px;top:164.13px;font-size:13.4px;color:#111;letter-spacing:-0.12px">Коваль Л. П.</div>
<div class="t" style="left:160px;width:114px;text-align:center;top:165.24px;font-size:12.4px;color:#111">1978</div>
<div class="t" style="left:274px;width:161px;text-align:center;top:165.24px;font-size:12.4px;color:#111;letter-spacing:0.05px">23.06.2016</div>
<div class="t" style="left:435px;width:217px;text-align:center;top:165.24px;font-size:12.4px;color:#111">12821</div>
<div class="t" style="left:2.5px;top:184.13px;font-size:13.4px;color:#111;letter-spacing:-0.1px">Парфенов Д. Ф.</div>
<div class="t" style="left:160px;width:114px;text-align:center;top:185.24px;font-size:12.4px;color:#111">1969</div>
<div class="t" style="left:274px;width:161px;text-align:center;top:185.24px;font-size:12.4px;color:#111;letter-spacing:0.05px">23.06.2016</div>
<div class="t" style="left:435px;width:217px;text-align:center;top:185.24px;font-size:12.4px;color:#111">35254</div>
<div class="t" style="left:2.5px;top:204.13px;font-size:13.4px;color:#111;letter-spacing:0px">Петров Ф. Л.</div>
<div class="t" style="left:160px;width:114px;text-align:center;top:205.24px;font-size:12.4px;color:#111">1987</div>
<div class="t" style="left:274px;width:161px;text-align:center;top:205.24px;font-size:12.4px;color:#111;letter-spacing:0.05px">23.06.2016</div>
<div class="t" style="left:435px;width:217px;text-align:center;top:205.24px;font-size:12.4px;color:#111">11698</div>
<div class="t" style="left:2.5px;top:224.13px;font-size:13.4px;color:#111;letter-spacing:0.08px">Попова М. Д.</div>
<div class="t" style="left:160px;width:114px;text-align:center;top:225.24px;font-size:12.4px;color:#111">1981</div>
<div class="t" style="left:274px;width:161px;text-align:center;top:225.24px;font-size:12.4px;color:#111;letter-spacing:0.05px">23.06.2016</div>
<div class="t" style="left:435px;width:217px;text-align:center;top:225.24px;font-size:12.4px;color:#111">9800</div>
<div class="t" style="left:2.5px;top:244.13px;font-size:13.4px;color:#111;letter-spacing:0.07px">Николаев А. Д.</div>
<div class="t" style="left:160px;width:114px;text-align:center;top:245.24px;font-size:12.4px;color:#111">1985</div>
<div class="t" style="left:274px;width:161px;text-align:center;top:245.24px;font-size:12.4px;color:#111;letter-spacing:0.05px">25.07.2016</div>
<div class="t" style="left:435px;width:217px;text-align:center;top:245.24px;font-size:12.4px;color:#111">23754</div>
<div class="t" style="left:2.5px;top:264.13px;font-size:13.4px;color:#111;letter-spacing:-0.27px">Сафронова В. М.</div>
<div class="t" style="left:160px;width:114px;text-align:center;top:265.24px;font-size:12.4px;color:#111">1973</div>
<div class="t" style="left:274px;width:161px;text-align:center;top:265.24px;font-size:12.4px;color:#111;letter-spacing:0.05px">25.07.2016</div>
<div class="t" style="left:435px;width:217px;text-align:center;top:265.24px;font-size:12.4px;color:#111">17115</div>
<div class="t" style="left:2.5px;top:284.13px;font-size:13.4px;color:#111;letter-spacing:-0.12px">Коваль Л. П.</div>
<div class="t" style="left:160px;width:114px;text-align:center;top:285.24px;font-size:12.4px;color:#111">1978</div>
<div class="t" style="left:274px;width:161px;text-align:center;top:285.24px;font-size:12.4px;color:#111;letter-spacing:0.05px">25.07.2016</div>
<div class="t" style="left:435px;width:217px;text-align:center;top:285.24px;font-size:12.4px;color:#111">11456</div>
<div class="t" style="left:2.5px;top:304.13px;font-size:13.4px;color:#111;letter-spacing:-0.1px">Парфенов Д. Ф.</div>
<div class="t" style="left:160px;width:114px;text-align:center;top:305.24px;font-size:12.4px;color:#111">1969</div>
<div class="t" style="left:274px;width:161px;text-align:center;top:305.24px;font-size:12.4px;color:#111;letter-spacing:0.05px">25.07.2016</div>
<div class="t" style="left:435px;width:217px;text-align:center;top:305.24px;font-size:12.4px;color:#111">35254</div>
<div class="t" style="left:2.5px;top:324.13px;font-size:13.4px;color:#111;letter-spacing:0px">Петров Ф. Л.</div>
<div class="t" style="left:160px;width:114px;text-align:center;top:325.24px;font-size:12.4px;color:#111">1987</div>
<div class="t" style="left:274px;width:161px;text-align:center;top:325.24px;font-size:12.4px;color:#111;letter-spacing:0.05px">25.07.2016</div>
<div class="t" style="left:435px;width:217px;text-align:center;top:325.24px;font-size:12.4px;color:#111">12102</div>
<div class="t" style="left:2.5px;top:344.13px;font-size:13.4px;color:#111;letter-spacing:0.08px">Попова М. Д.</div>
<div class="t" style="left:160px;width:114px;text-align:center;top:345.24px;font-size:12.4px;color:#111">1981</div>
<div class="t" style="left:274px;width:161px;text-align:center;top:345.24px;font-size:12.4px;color:#111;letter-spacing:0.05px">25.07.2016</div>
<div class="t" style="left:435px;width:217px;text-align:center;top:345.24px;font-size:12.4px;color:#111">9800</div>
</div>
<div class="a" style="left:866px;top:167px;width:16px;height:398px;background:linear-gradient(90deg,#e2e5ea,#eef0f3 40%,#e6e9ee)"></div>
<svg class="a" style="left:868px;top:172px" width="11" height="7" viewBox="0 0 11 7"><path d="M0.5 6 L5 1 L9.5 6 Z" fill="#40444a"/></svg>
<div class="a" style="left:867px;top:185px;width:14px;height:145px;border:1px solid #a9b0b9;border-radius:2px;background:linear-gradient(90deg,#f7f8fa,#e7eaee 60%,#d9dde3)"></div>
<svg class="a" style="left:869px;top:253px" width="10" height="7" viewBox="0 0 10 7"><path d="M1 0.5h8M1 2.5h8M1 4.5h8M1 6.5h8" stroke="#6d737b"/></svg>
<svg class="a" style="left:869px;top:552px" width="11" height="7" viewBox="0 0 11 7"><path d="M0.5 1 L5 6 L9.5 1 Z" fill="#40444a"/></svg>
<div class="a" style="left:8px;top:564px;width:874px;height:16px;background:linear-gradient(#e4e7eb,#e6e9ed 50%,#dfe2e6);border-top:1px solid #b9bfc7"></div>
<div class="a" style="left:8px;top:579px;width:874px;height:2px;background:#b8bec6"></div>
<svg class="a" style="left:13px;top:568px" width="8" height="9" viewBox="0 0 8 9"><rect x="0" y="0.5" width="1.6" height="8" fill="#40444a"/><path d="M7 0.5 V8.5 L2 4.5Z" fill="#40444a"/></svg>
<svg class="a" style="left:28px;top:568px" width="7" height="9" viewBox="0 0 7 9"><path d="M6 0.5 V8.5 L1 4.5Z" fill="#40444a"/></svg>
<svg class="a" style="left:43px;top:568px" width="7" height="9" viewBox="0 0 7 9"><path d="M1 0.5 V8.5 L6 4.5Z" fill="#40444a"/></svg>
<svg class="a" style="left:57px;top:568px" width="8" height="9" viewBox="0 0 8 9"><path d="M0.5 0.5 V8.5 L5.5 4.5Z" fill="#40444a"/><rect x="6" y="0.5" width="1.6" height="8" fill="#40444a"/></svg>
<div class="a" style="left:70px;top:564px;width:1px;height:16px;background:#c0c6ce"></div>
<svg class="a" style="left:77px;top:564px" width="16" height="16" viewBox="0 0 16 16"><path d="M0.5 15.5 L13.5 1.5" stroke="#aeb5be" stroke-width="1"/><path d="M2 15 L6 15 L4 12Z" fill="#fff" stroke="#b8bec6" stroke-width="0.6"/></svg>
<svg class="a" style="left:130px;top:564px" width="16" height="16" viewBox="0 0 16 16"><path d="M0.5 15.5 L13.5 1.5" stroke="#aeb5be" stroke-width="1"/><path d="M2 15 L6 15 L4 12Z" fill="#fff" stroke="#b8bec6" stroke-width="0.6"/></svg>
<svg class="a" style="left:183px;top:564px" width="16" height="16" viewBox="0 0 16 16"><path d="M0.5 15.5 L13.5 1.5" stroke="#aeb5be" stroke-width="1"/><path d="M2 15 L6 15 L4 12Z" fill="#fff" stroke="#b8bec6" stroke-width="0.6"/></svg>
<svg class="a" style="left:236px;top:564px" width="16" height="16" viewBox="0 0 16 16"><path d="M0.5 15.5 L13.5 1.5" stroke="#aeb5be" stroke-width="1"/><path d="M2 15 L6 15 L4 12Z" fill="#fff" stroke="#b8bec6" stroke-width="0.6"/></svg>
<svg class="a" style="left:289px;top:564px" width="16" height="16" viewBox="0 0 16 16"><path d="M0.5 15.5 L13.5 1.5" stroke="#aeb5be" stroke-width="1"/><path d="M2 15 L6 15 L4 12Z" fill="#fff" stroke="#b8bec6" stroke-width="0.6"/></svg>
<svg class="a" style="left:351px;top:564px" width="16" height="16" viewBox="0 0 16 16"><path d="M0.5 15.5 L13.5 1.5" stroke="#aeb5be" stroke-width="1"/><path d="M2 15 L6 15 L4 12Z" fill="#fff" stroke="#b8bec6" stroke-width="0.6"/></svg>
<svg class="a" style="left:464px;top:564px" width="16" height="16" viewBox="0 0 16 16"><path d="M0.5 15.5 L13.5 1.5" stroke="#aeb5be" stroke-width="1"/><path d="M2 15 L6 15 L4 12Z" fill="#fff" stroke="#b8bec6" stroke-width="0.6"/></svg>
<div class="t" style="left:90.58px;top:567.09px;font-size:12px;color:#4a4a4a;letter-spacing:0.423px;">Лист7</div>
<div class="t" style="left:142.88px;top:567.09px;font-size:12px;color:#4a4a4a;letter-spacing:0.548px;">Лист5</div>
<div class="t" style="left:196.28px;top:567.09px;font-size:12px;color:#4a4a4a;letter-spacing:0.548px;">Лист8</div>
<div class="t" style="left:249.28px;top:567.09px;font-size:12px;color:#4a4a4a;letter-spacing:0.622px;">Лист9</div>
<div class="t" style="left:303.78px;top:567.09px;font-size:12px;color:#4a4a4a;letter-spacing:0.404px;">Лист10</div>
<div class="t" style="left:364.28px;top:567.09px;font-size:12px;color:#4a4a4a;letter-spacing:0.582px;">Лист11</div>
<div class="t" style="left:477.28px;top:567.09px;font-size:12px;color:#4a4a4a;letter-spacing:0.423px;">Лист2</div>
<div class="a" style="left:414px;top:564px;width:54px;height:15px;background:#fff;border-left:1px solid #9aa2ab"></div>
<div class="t" style="left:423.58px;top:567.09px;font-size:12px;color:#333;font-weight:700;letter-spacing:0.452px;">Лист1</div>
<div class="a" style="left:523px;top:565px;width:7px;height:14px;background:#fff;border:1px solid #8e969f"></div>
<div class="a" style="left:525.5px;top:567px;width:1px;height:10px;background:#777"></div>
<svg class="a" style="left:535px;top:568px" width="7" height="9" viewBox="0 0 7 9"><path d="M6 0.5 V8.5 L1 4.5Z" fill="#40444a"/></svg>
<div class="a" style="left:542px;top:564px;width:81px;height:15px;background:#dfe2e7"></div>
<div class="a" style="left:545px;top:566px;width:76px;height:1px;background:repeating-linear-gradient(90deg,#f2f4f6 0,#f2f4f6 1px,transparent 1px,transparent 4px)"></div>
<div class="a" style="left:623px;top:564px;width:188px;height:15px;border:1px solid #a8afb8;border-radius:2px;background:linear-gradient(#f5f6f8,#e6e9ed 60%,#dadee3)"></div>
<svg class="a" style="left:712px;top:568px" width="9" height="7" viewBox="0 0 9 7"><path d="M1.5 0.5V6.5M3.5 0.5V6.5M5.5 0.5V6.5M7.5 0.5V6.5" stroke="#6d737b"/></svg>
<div class="a" style="left:811px;top:564px;width:54px;height:15px;background:#dde1e6"></div>
<svg class="a" style="left:854px;top:568px" width="7" height="9" viewBox="0 0 7 9"><path d="M1 0.5 V8.5 L6 4.5Z" fill="#40444a"/></svg>
<div class="a" style="left:865px;top:564px;width:1px;height:16px;background:#c6ccd3"></div>
<div class="a" style="left:866px;top:564px;width:16px;height:16px;background:#e3e6ea"></div>
<div class="a" style="left:8px;top:581px;width:874px;height:21px;background:linear-gradient(#e6e9ec 0,#dcdfe3 40%,#cdd1d6 75%,#c5c9cf 100%);border-top:1px solid #f2f4f6"></div>
<div class="t" style="left:16.00px;top:584.69px;font-size:12px;color:#3a3a3a;letter-spacing:-0.2px;">Готово</div>
<div class="a" style="left:62px;top:583px;width:1px;height:17px;background:#b9bfc7"></div>
<div class="a" style="left:63px;top:583px;width:1px;height:17px;background:#f6f7f9"></div>
<svg class="a" style="left:72px;top:583px" width="16" height="14" viewBox="0 0 16 14"><rect x="1.5" y="2.5" width="13" height="11" fill="#fff" stroke="#5a7ec0"/><rect x="2" y="3" width="12" height="2.5" fill="#5a84cc"/><path d="M4 8h3M8.5 8h4M4 10.5h3M8.5 10.5h4" stroke="#7d9bd0"/><circle cx="3.5" cy="3" r="2.8" fill="#e0432c"/></svg>
<div class="a" style="left:97px;top:583px;width:1px;height:17px;background:#b9bfc7"></div>
<div class="a" style="left:98px;top:583px;width:1px;height:17px;background:#f6f7f9"></div>
<div class="a" style="left:625px;top:583px;width:1px;height:17px;background:#b9bfc7"></div>
<div class="a" style="left:626px;top:583px;width:1px;height:17px;background:#f6f7f9"></div>
<div class="a" style="left:630px;top:582px;width:19px;height:19px;border:1px solid #e3ab47;border-radius:2px;background:linear-gradient(#fee9a6,#fdd86c)"></div>
<svg class="a" style="left:633px;top:585px" width="14" height="13" viewBox="0 0 14 13"><rect x="0.5" y="0.5" width="12" height="11" fill="#fff" stroke="#555c66"/><path d="M0.5 4.5H12.5M0.5 8H12.5M4.5 0.5V11.5M8.5 0.5V11.5" stroke="#555c66"/></svg>
<svg class="a" style="left:651px;top:585px" width="15" height="14" viewBox="0 0 15 14"><rect x="0.5" y="0.5" width="13" height="12" fill="#d9dde3" stroke="#6a717b"/><rect x="3.5" y="2.5" width="7" height="8" fill="#fff" stroke="#6a717b"/><path d="M5 5h4M5 7h4" stroke="#8a9099"/></svg>
<svg class="a" style="left:669px;top:585px" width="15" height="14" viewBox="0 0 15 14"><rect x="0.5" y="0.5" width="13" height="12" fill="#c9ced6" stroke="#6a717b"/><rect x="1" y="1" width="6" height="7" fill="#fff"/><path d="M4 1v7M7.5 0.5V12.5" stroke="#555c66"/></svg>
<div class="t" style="left:695.60px;top:585.69px;font-size:12px;color:#3a3a3a;letter-spacing:-0.7px;">100%</div>
<svg class="a" style="left:730px;top:582px" width="18" height="18" viewBox="0 0 18 18"><defs><linearGradient id="zg" x1="0" y1="0" x2="0" y2="1"><stop offset="0" stop-color="#ffffff"/><stop offset="1" stop-color="#d8dce2"/></linearGradient></defs><circle cx="9" cy="9" r="7.8" fill="url(#zg)" stroke="#7d848d"/><rect x="5" y="8" width="8" height="2.2" fill="#40454c"/></svg>
<div class="a" style="left:748px;top:590px;width:99px;height:1px;background:#9aa1aa"></div>
<div class="a" style="left:748px;top:591px;width:99px;height:1px;background:#fff"></div>
<svg class="a" style="left:792px;top:583px" width="12" height="15" viewBox="0 0 12 15"><path d="M1.5 0.5 H10.5 V9.5 L6 13.5 L1.5 9.5 Z" fill="#f7f8fa" stroke="#6e757e"/></svg>
<svg class="a" style="left:846px;top:582px" width="18" height="18" viewBox="0 0 18 18"><circle cx="9" cy="9" r="7.8" fill="url(#zg)" stroke="#7d848d"/><rect x="5" y="8" width="8" height="2.2" fill="#40454c"/><rect x="7.9" y="5" width="2.2" height="8" fill="#40454c"/></svg>
<svg class="a" style="left:870px;top:589px" width="12" height="12" viewBox="0 0 12 12"><g fill="#b3b9c1"><rect x="9" y="1" width="2" height="2"/><rect x="6" y="4" width="2" height="2"/><rect x="9" y="4" width="2" height="2"/><rect x="3" y="7" width="2" height="2"/><rect x="6" y="7" width="2" height="2"/><rect x="9" y="7" width="2" height="2"/><rect x="0" y="10" width="2" height="2"/><rect x="3" y="10" width="2" height="2"/><rect x="6" y="10" width="2" height="2"/><rect x="9" y="10" width="2" height="2"/></g></svg>
<svg class="a" style="left:0;top:0" width="890" height="610" viewBox="0 0 890 610"><path d="M215 167.5 C300 166 390 166 430 168 C465 170 477.8 175 477.8 190 L477.8 212 C477.8 228 465 234 430 236.5 C360 239 260 238.5 215 236 C196 234.5 187.5 228 187.5 215 L187.5 185 C187.5 172 196 168 215 167.5 Z" fill="none" stroke="#ea1a22" stroke-width="5.2"/></svg>
</body></html>
